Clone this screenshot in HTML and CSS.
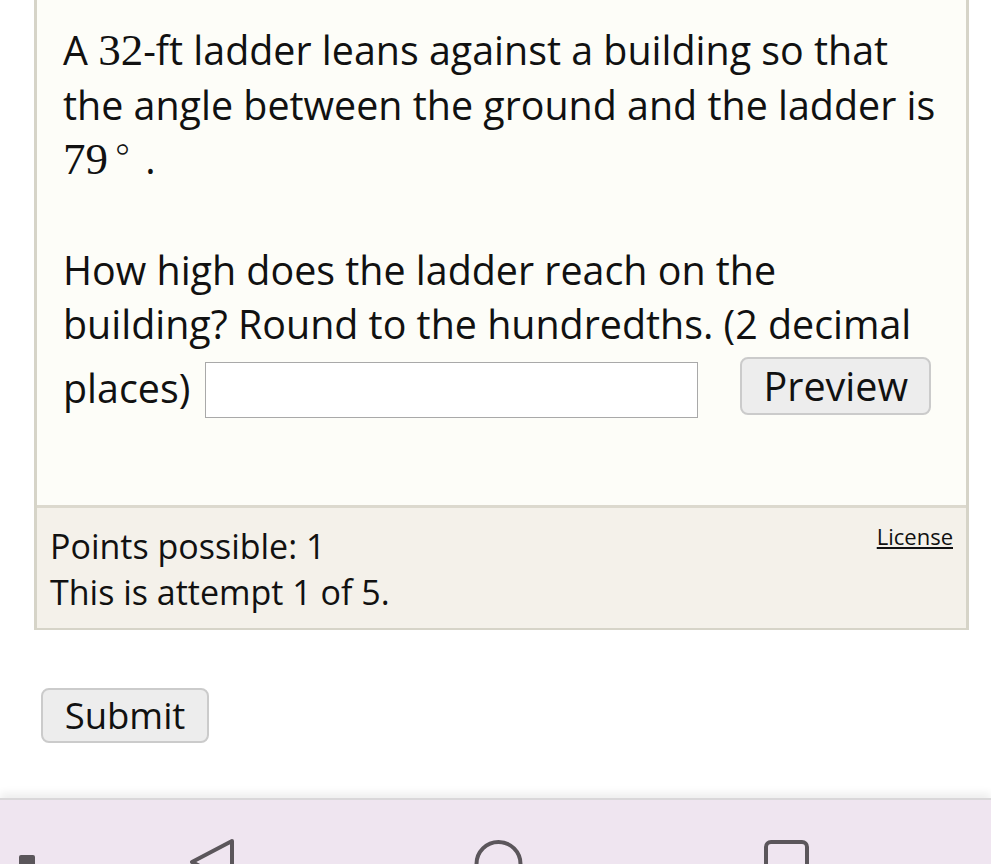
FILE: index.html
```html
<!DOCTYPE html>
<html>
<head>
<meta charset="utf-8">
<link rel="stylesheet" href="styles.css">
</head>
<body>
<main class="page">
  <div class="question-box">
    <div class="question">
      <p class="q1">A <span class="math">32</span>-ft ladder leans against a building so that the angle between the ground and the ladder is <span class="math">79<sup class="deg">∘</sup></span> .</p>
      <p class="q2">How high does the ladder reach on the building? Round to the hundredths. (2 decimal</p>
      <div class="answer-row">
        <span class="answer-label">places)</span>
        <input class="answer" type="text">
        <button class="btn preview">Preview</button>
      </div>
    </div>
    <div class="footer">
      <a class="license" href="#">License</a>
      <div class="info">Points possible: 1</div>
      <div class="info">This is attempt 1 of 5.</div>
    </div>
  </div>
  <button class="btn submit">Submit</button>
</main>
<nav class="navbar">
  <svg class="ico ico-recent" width="16" height="20" viewBox="0 0 16 20"><rect x="0" y="0" width="16" height="24" rx="2" fill="#5b565b"/></svg>
  <svg class="ico ico-back" width="48" height="60" viewBox="0 0 48 60"><path d="M44 3 L4 24 L44 45 Z" fill="none" stroke="#5b565b" stroke-width="4" stroke-linejoin="round"/></svg>
  <svg class="ico ico-home" width="53" height="60" viewBox="0 0 53 60"><circle cx="26.5" cy="26" r="22" fill="none" stroke="#5b565b" stroke-width="4"/></svg>
  <svg class="ico ico-apps" width="49" height="60" viewBox="0 0 49 60"><rect x="4" y="4" width="41" height="41" rx="5" fill="none" stroke="#5b565b" stroke-width="4"/></svg>
</nav>
</body>
</html>
```

FILE: styles.css
```css
html, body {
  margin: 0;
  padding: 0;
  background: #ffffff;
}
body {
  display: flex;
  flex-direction: column;
  min-height: 100vh;
  height: 864px;
  overflow: hidden;
  font-family: "Open Sans", "Noto Sans", sans-serif;
  color: #111111;
}
.page {
  padding: 0 22px 0 34px;
}
.question-box {
  border-left: 3px solid #d6d4c8;
  border-right: 3px solid #d6d4c8;
  border-bottom: 2px solid #d6d4c8;
}
.question {
  background: #fdfdf8;
  padding: 23px 26px 87px 26px;
  border-bottom: 3px solid #dcd9ce;
  font-size: 39.4px;
  line-height: 54.6px;
}
.question p {
  margin: 0;
}
.q2 {
  margin-top: 56px !important;
}
.math {
  font-family: "Liberation Serif", "DejaVu Serif", serif;
  font-size: 45px;
  line-height: 1;
}
.deg {
  font-family: "DejaVu Sans", sans-serif;
  font-weight: 200;
  font-size: 40px;
  vertical-align: 12px;
  line-height: 0;
  margin-left: 2px;
}
.answer-row {
  display: flex;
  align-items: flex-start;
}
.answer-label {
  margin-top: 9px;
}
.answer {
  flex: none;
  width: 493px;
  height: 56px;
  box-sizing: border-box;
  border: 1px solid #a9a9a9;
  background: #ffffff;
  margin: 10px 0 0 15px;
  padding: 0;
}
.btn {
  font-family: "Open Sans", "Noto Sans", sans-serif;
  color: #111111;
  background: #ededed;
  border: 2px solid #cbcbcb;
  border-radius: 8px;
  box-sizing: border-box;
  padding: 0;
  cursor: pointer;
}
.preview {
  flex: none;
  width: 191px;
  height: 58px;
  font-size: 39.5px;
  line-height: 52px;
  margin: 5px 0 0 42px;
}
.footer {
  background: #f4f1ea;
  padding: 15px 13px 13px 13px;
  font-size: 34px;
  line-height: 46px;
}
.license {
  float: right;
  color: #111111;
  font-size: 22px;
  line-height: 30px;
  margin-top: -2px;
}
.submit {
  display: block;
  margin: 58px 0 0 7px;
  width: 168px;
  height: 55px;
  font-size: 36.5px;
  line-height: 49px;
}
.navbar {
  margin-top: auto;
  height: 64px;
  border-top: 2px solid #d9d7d9;
  box-shadow: 0 -5px 8px rgba(0, 0, 0, 0.07);
  background: #efe5f0;
  display: flex;
  align-items: flex-start;
  padding-left: 19px;
  overflow: hidden;
}
.ico {
  flex: none;
  display: block;
  overflow: visible;
}
.ico-recent {
  margin-top: 55px;
}
.ico-back {
  margin-top: 38px;
  margin-left: 153px;
}
.ico-home {
  margin-top: 38px;
  margin-left: 236px;
}
.ico-apps {
  margin-top: 38px;
  margin-left: 237px;
}
```
